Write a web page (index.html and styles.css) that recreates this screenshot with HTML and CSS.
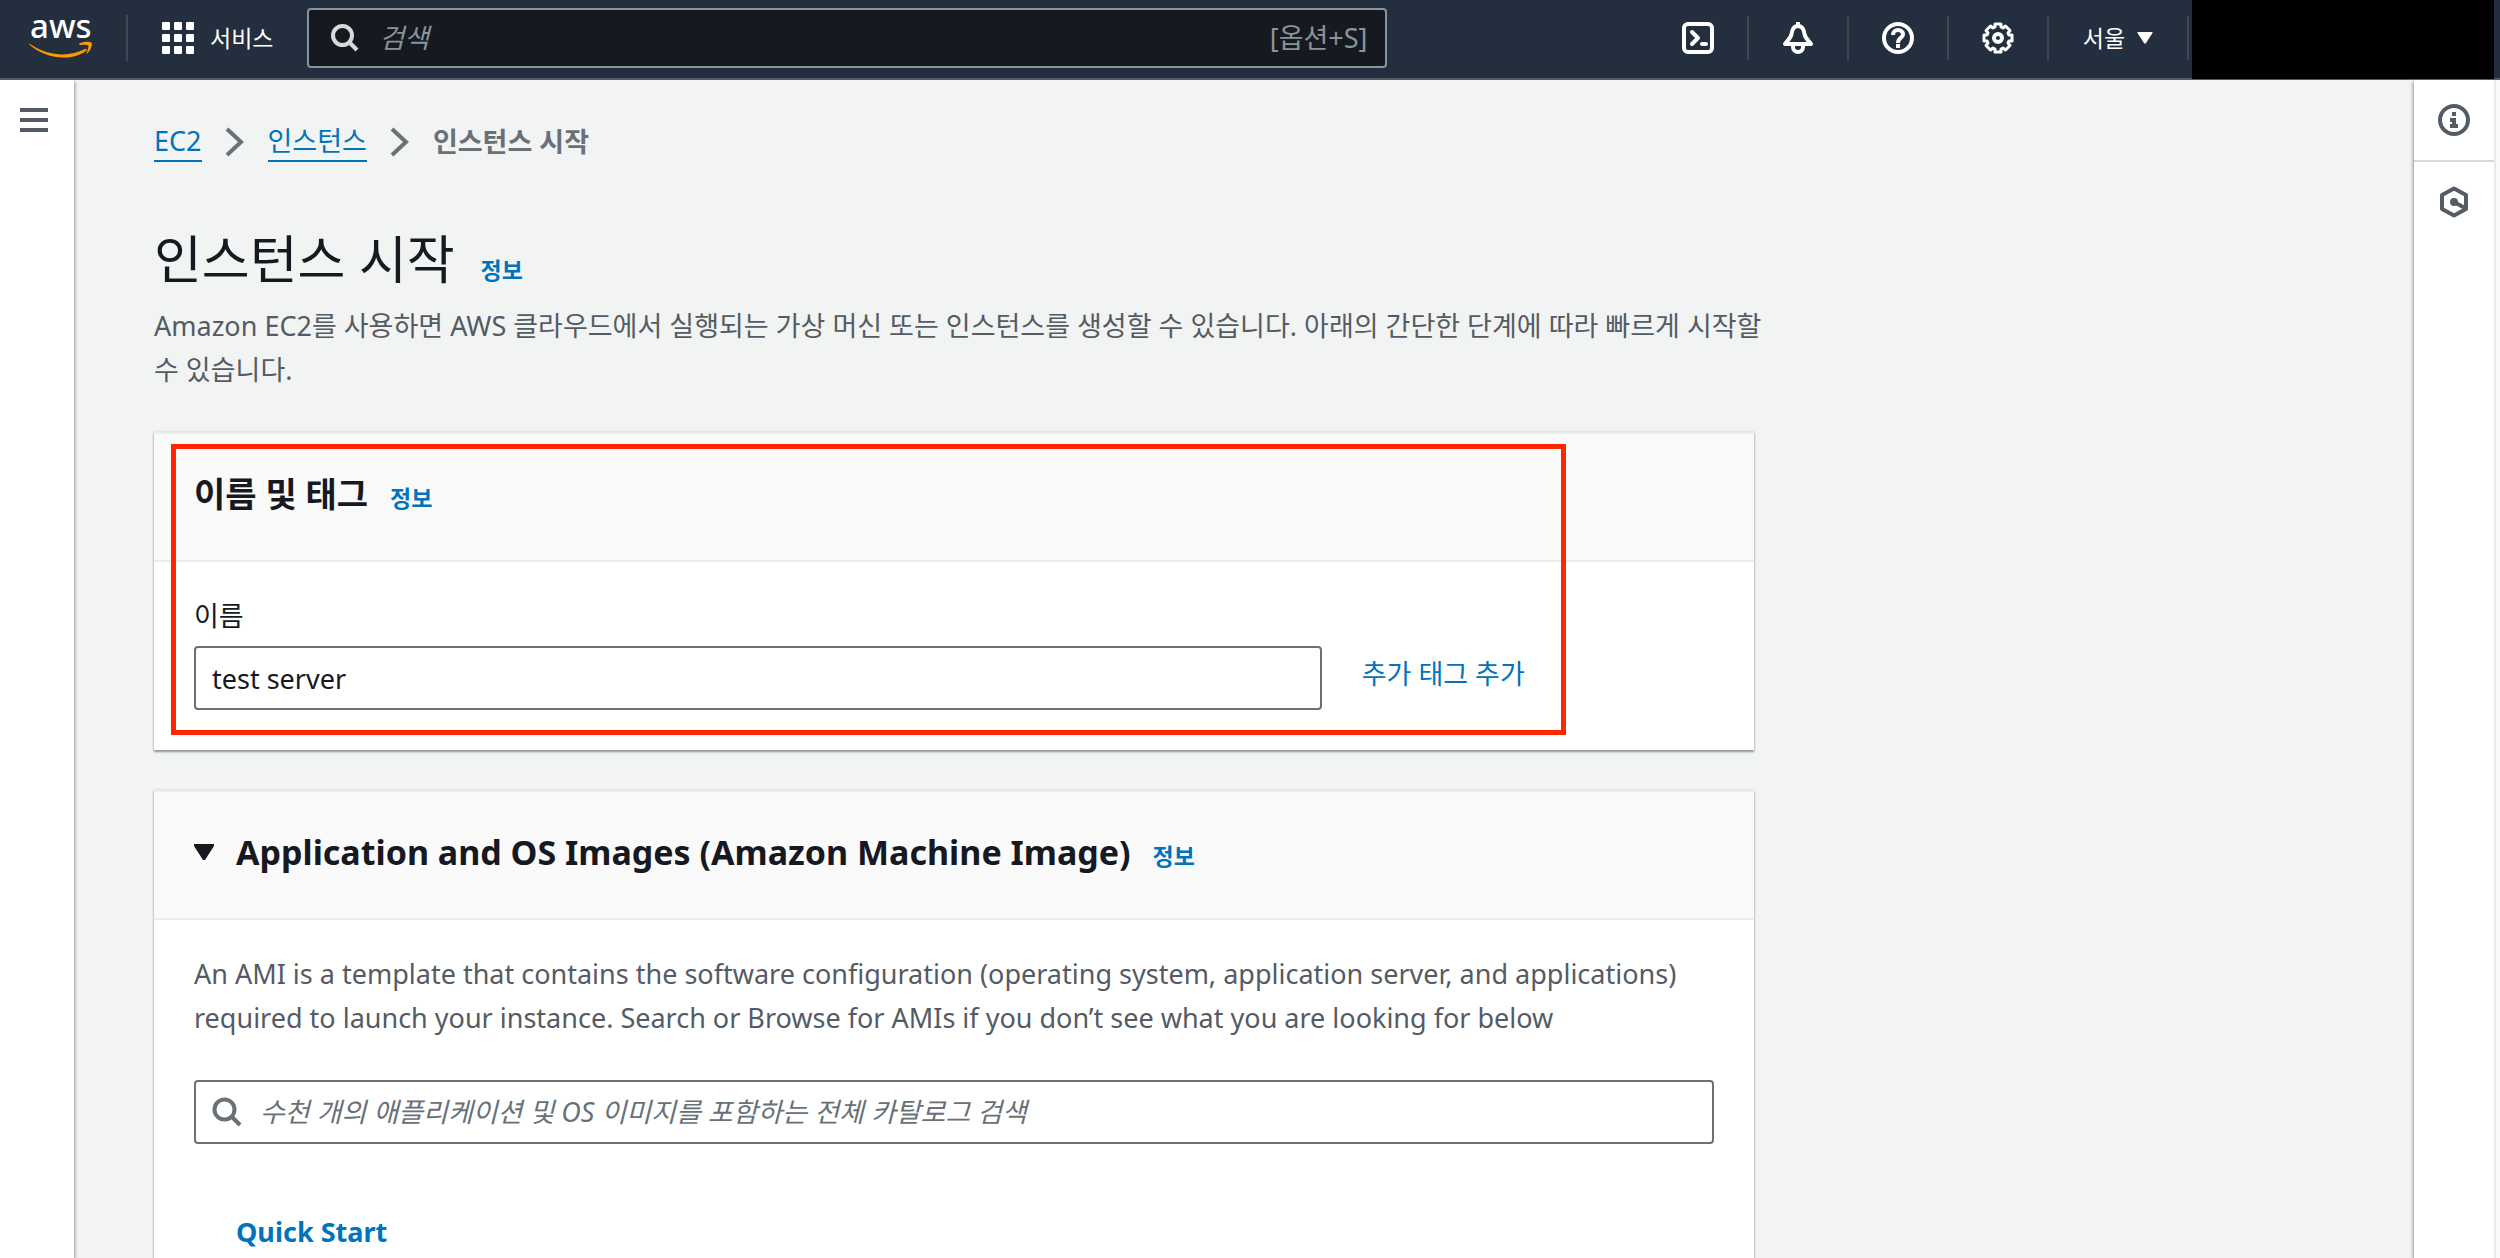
FILE: index.html
```html
<!DOCTYPE html>
<html lang="ko">
<head>
<meta charset="utf-8">
<meta name="viewport" content="width=device-width, initial-scale=1">
<title>인스턴스 시작 | EC2</title>
<link rel="stylesheet" href="styles.css">
</head>
<body>
<header class="topnav">
  <a class="logo" href="#" aria-label="aws">
    <svg width="64" height="46" viewBox="0 0 64 46">
      <text class="logo-word" x="1" y="23">aws</text>
      <path d="M1 29C20 42 41 42 56 34C57.500 33.300 58.500 34.800 57.200 35.700C42 47 17 44 .500 29.800C-.200 29 .500 28.600 1 29Z" fill="#ff9900"/>
      <path d="M50.500 28.600C54 26.300 60.500 26.300 62.400 27.600C64 29.500 61.500 36 58.200 38.600C57.500 39 57.200 38.700 57.500 38C58.700 35 60 31.500 59.300 30.400C58.500 29.300 54 29.700 51 30C50 30 49.800 29.300 50.500 28.600Z" fill="#ff9900"/>
    </svg>
  </a>
  <button class="services" type="button">
    <svg width="32" height="32" viewBox="0 0 32 32" fill="currentColor"><rect width="8" height="8" rx="1"/><rect x="12" width="8" height="8" rx="1"/><rect x="24" width="8" height="8" rx="1"/><rect y="12" width="8" height="8" rx="1"/><rect x="12" y="12" width="8" height="8" rx="1"/><rect x="24" y="12" width="8" height="8" rx="1"/><rect y="24" width="8" height="8" rx="1"/><rect x="12" y="24" width="8" height="8" rx="1"/><rect x="24" y="24" width="8" height="8" rx="1"/></svg>
    서비스
  </button>
  <label class="nav-search">
    <svg width="28" height="28" viewBox="0 0 28 28" fill="none" stroke="#d5dbdb" stroke-width="4"><circle cx="11.500" cy="11.500" r="9.500"/><path d="M18 18L26 26"/></svg>
    <input type="search" placeholder="검색" aria-label="검색">
    <span>[옵션+S]</span>
  </label>
  <div class="nav-tools">
    <button type="button" aria-label="CloudShell"><svg width="32" height="32" viewBox="0 0 32 32" fill="none" stroke="currentColor" stroke-width="4" stroke-linecap="round" stroke-linejoin="round"><rect x="2" y="2" width="28" height="28" rx="4"/><path d="M10 10L16 16L10 22M20 22H24"/></svg></button>
    <button type="button" aria-label="알림"><svg width="32" height="32" viewBox="0 0 32 32" fill="none" stroke="currentColor" stroke-width="4" stroke-linejoin="round"><path d="M16 0V4M16 4C11 4 10 8 9.500 12C9 16 6 18 3 22H29C26 18 23 16 22.500 12C22 8 21 4 16 4ZM11 23V25C11 31.500 21 31.500 21 25V23"/></svg></button>
    <button type="button" aria-label="도움말"><svg width="32" height="32" viewBox="0 0 32 32" fill="none" stroke="currentColor"><circle cx="16" cy="16" r="14" stroke-width="4"/><path d="M11 13C11 6.500 21 6.500 21 12.500C21 16 16 15.500 16 21" stroke-width="4"/><path d="M14 24H18" stroke-width="4"/></svg></button>
    <button type="button" aria-label="설정"><svg width="32" height="32" viewBox="0 0 32 32" fill="none" stroke="currentColor" stroke-width="3" stroke-linejoin="round"><path d="M13 2H19V5L21 6L23.500 4L28 8.500L26 11L27 13H30V19H27L26 21L28 23.500L23.500 28L21 26L19 27V30H13V27L11 26L8.500 28L4 23.500L6 21L5 19H2V13H5L6 11L4 8.500L8.500 4L11 6L13 5Z"/><circle cx="16" cy="16" r="4" stroke-width="4"/></svg></button>
    <button type="button" class="region">서울 <svg width="16" height="12" viewBox="0 0 16 12" fill="currentColor"><path d="M1 0H15Q16 0 15.500 1L9 11Q8 12.500 7 11L.500 1Q0 0 1 0Z"/></svg></button>
  </div>
  <div class="account"></div>
</header>

<div class="shell">
  <nav class="rail rail-left">
    <button type="button" aria-label="메뉴"><svg width="28" height="24" viewBox="0 0 28 24" fill="currentColor"><path d="M0 0H28V4H0ZM0 10H28V14H0ZM0 20H28V24H0Z"/></svg></button>
  </nav>

  <main class="content">
    <div class="column">
      <nav class="breadcrumb">
        <a href="#">EC2</a>
        <svg width="20" height="30" viewBox="0 0 20 30" fill="none" stroke="#687078" stroke-width="4"><path d="M2 2L16 15L2 28"/></svg>
        <a href="#">인스턴스</a>
        <svg width="20" height="30" viewBox="0 0 20 30" fill="none" stroke="#687078" stroke-width="4"><path d="M2 2L16 15L2 28"/></svg>
        <span>인스턴스 시작</span>
      </nav>

      <div class="title">
        <h1>인스턴스 시작</h1>
        <a class="info" href="#">정보</a>
      </div>
      <p class="lead">Amazon EC2를 사용하면 AWS 클라우드에서 실행되는 가상 머신 또는 인스턴스를 생성할 수 있습니다. 아래의 간단한 단계에 따라 빠르게 시작할<br>수 있습니다.</p>

      <section class="card">
        <div class="card-head">
          <h2>이름 및 태그</h2>
          <a class="info" href="#">정보</a>
        </div>
        <div class="card-body name-body">
          <label for="name">이름</label>
          <div class="name-row">
            <input id="name" class="field" type="text" value="test server">
            <a href="#">추가 태그 추가</a>
          </div>
        </div>
        <div class="highlight"></div>
      </section>

      <section class="card card-open">
        <div class="card-head">
          <button class="toggle" type="button" aria-label="접기"><svg width="20" height="16" viewBox="0 0 20 16" fill="currentColor"><path d="M0 0H20V2L11 16H9L0 2Z"/></svg></button>
          <h2>Application and OS Images (Amazon Machine Image)</h2>
          <a class="info" href="#">정보</a>
        </div>
        <div class="card-body">
          <p>An AMI is a template that contains the software configuration (operating system, application server, and applications) required to launch your instance. Search or Browse for AMIs if you don’t see what you are looking for below</p>
          <label class="field ami-search">
            <svg width="30" height="30" viewBox="0 0 30 30" fill="none" stroke="#687078" stroke-width="4"><circle cx="12.500" cy="12.500" r="10"/><path d="M19.500 19.500L28 28"/></svg>
            <input type="search" aria-label="AMI 검색" placeholder="수천 개의 애플리케이션 및 OS 이미지를 포함하는 전체 카탈로그 검색">
          </label>
          <a class="tab" href="#">Quick Start</a>
        </div>
      </section>
    </div>
  </main>

  <aside class="rail rail-right">
    <button type="button" aria-label="정보"><svg width="32" height="32" viewBox="0 0 32 32" fill="none" stroke="currentColor" stroke-width="4"><circle cx="16" cy="16" r="14"/><path d="M14 10H18M12 16H18M16 16V22M12 22H20" /></svg></button>
    <button type="button" aria-label="튜토리얼"><svg width="32" height="32" viewBox="0 0 32 32" fill="none" stroke="currentColor" stroke-width="4" stroke-linejoin="round"><path d="M16 2.500L28 9V23L16 29.500L4 23V9ZM16 16L27 22"/><circle cx="16" cy="16" r="4" fill="currentColor" stroke="none"/></svg></button>
  </aside>
  <div class="gutter"></div>
</div>
</body>
</html>
```
FILE: styles.css
```css
* { box-sizing: border-box; }

body {
  margin: 0;
  height: 100vh;
  display: flex;
  flex-direction: column;
  overflow: hidden;
  background: #f2f3f3;
  color: #16191f;
  font: 27px/44px "Noto Sans", "Noto Sans CJK KR", sans-serif;
}

h1, h2, p { margin: 0; }
a { color: #0073bb; text-decoration: none; }
svg { display: block; flex: none; overflow: visible; }

button {
  display: flex;
  align-items: center;
  justify-content: center;
  padding: 0;
  border: 0;
  background: none;
  color: inherit;
  font: inherit;
}

input {
  min-width: 0;
  border: 0;
  outline: 0;
  background: none;
  color: inherit;
  font: inherit;
}

input::placeholder { color: inherit; font-style: italic; opacity: 1; }

/* Top navigation */
.topnav {
  flex: none;
  display: flex;
  align-items: center;
  height: 80px;
  padding: 0 6px 2px 0;
  border-bottom: 2px solid #545b64;
  background: #232f3e;
  color: #fff;
  font-size: 23px;
}

.logo {
  display: flex;
  padding: 0 33px 0 29px;
  border-right: 2px solid #414750;
}

.logo-word { font-size: 33px; font-weight: 500; line-height: 33px; fill: #fff; }

.services { gap: 16px; padding: 0 34px; white-space: nowrap; }

.nav-search {
  flex: 1;
  max-width: 1080px;
  display: flex;
  align-items: center;
  height: 60px;
  padding: 0 18px 0 22px;
  gap: 20px;
  border: 2px solid #879596;
  border-radius: 4px;
  background: #16191f;
  color: #879596;
  font-size: 27px;
}

.nav-search input { flex: 1; padding: 0; }

.nav-tools { display: flex; margin-left: auto; }

.nav-tools button {
  width: 100px;
  height: 44px;
  border-right: 2px solid #414750;
}

.nav-tools .region { width: 140px; gap: 12px; }

.account {
  flex: none;
  width: 302px;
  height: 79px;
  margin-left: 3px;
  align-self: flex-start;
  background: #000;
}

/* Page frame */
.shell { flex: 1; display: flex; min-height: 0; }

.rail { flex: none; background: #fff; color: #545b64; }
.rail-left { width: 74px; box-shadow: 1px 2px 3px #8d9599; }
.rail-left button { width: 68px; height: 80px; }
.rail-right { width: 80px; box-shadow: -1px 2px 3px #8d9599; }
.rail-right button { width: 80px; height: 82px; border-bottom: 2px solid #d5dbdb; }
.rail-right button + button { height: 80px; border: 0; }
.gutter { flex: none; width: 6px; border-left: 2px solid #e8e8e8; background: #fafafa; }

.content {
  flex: 1;
  display: grid;
  grid-template-columns: 11fr 4fr;
  min-width: 0;
  padding: 40px 78px 0 80px;
}

.column { display: flex; flex-direction: column; min-width: 0; }

.breadcrumb {
  display: flex;
  align-items: center;
  gap: 23px;
  color: #687078;
  font-size: 27px;
  font-weight: 700;
}

.breadcrumb a { border-bottom: 2px solid #0073bb; line-height: 38px; font-weight: 400; }

.title { display: flex; align-items: baseline; gap: 26px; margin-top: 62px; }
h1 { font-size: 52px; font-weight: 400; line-height: 66px; }
.info { font-size: 23px; font-weight: 700; }
.lead { margin: 12px 0 40px; color: #545b64; white-space: nowrap; }

/* Cards */
.card {
  position: relative;
  margin-bottom: 40px;
  border-top: 2px solid #eaeded;
  background: #fff;
  box-shadow: 0 2px 2px #8d9599, 0 0 2px #c4caca;
}

.card-open { flex: 1; margin-bottom: 0; }

.card-head {
  display: flex;
  align-items: baseline;
  height: 128px;
  padding: 38px 40px 0;
  gap: 22px;
  border-bottom: 2px solid #eaeded;
  background: #fafafa;
}

h2 { font-size: 34px; line-height: 44px; font-weight: 700; }

.toggle { align-self: flex-start; height: 44px; }

.card-body { padding: 32px 40px 40px; }
.card-body p { color: #545b64; }
.name-body label { display: block; }

.field {
  height: 64px;
  padding: 0 16px;
  border: 2px solid #687078;
  border-radius: 4px;
}

.name-body .field { width: 100%; }

.name-row {
  display: grid;
  grid-template-columns: 16fr 5fr;
  gap: 40px;
  margin-top: 8px;
}

.name-row a { margin-top: 6px; }

.ami-search { display: flex; align-items: center; gap: 18px; margin-top: 40px; color: #687078; }
.ami-search input { flex: 1; padding: 0; }

.tab { display: inline-block; margin: 66px 42px 0; font-weight: 700; }

.highlight {
  position: absolute;
  inset: 10px 188px 15px 17px;
  border: 5px solid #ff2600;
  pointer-events: none;
}
```
